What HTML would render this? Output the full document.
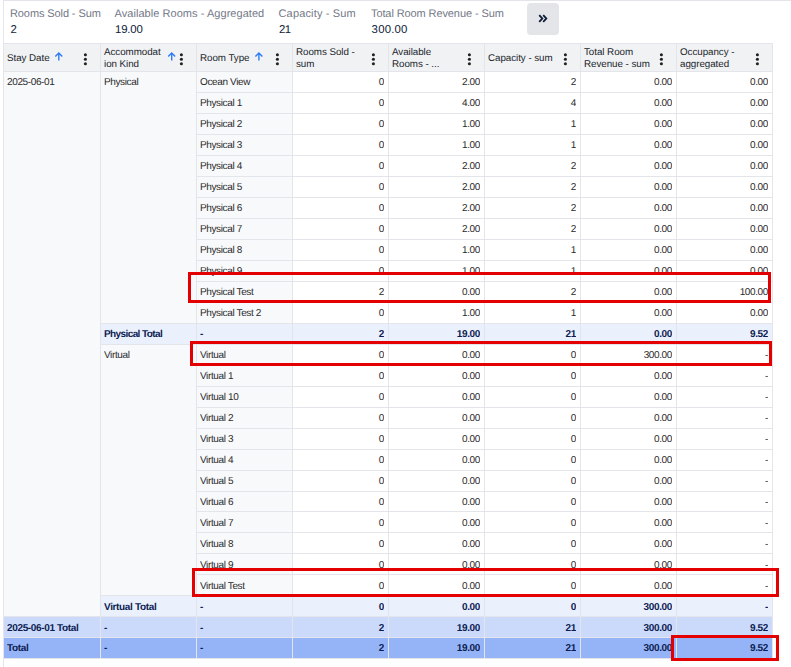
<!DOCTYPE html>
<html><head><meta charset="utf-8"><style>
html,body{margin:0;padding:0;width:791px;height:667px;overflow:hidden;background:#fff}
body{position:relative;font-family:"Liberation Sans",sans-serif;text-rendering:geometricPrecision}
body>div{position:absolute;box-sizing:border-box;white-space:nowrap}
.frame{}
.t{font-size:10px;color:#2a2a2a;letter-spacing:-0.37px;overflow:hidden}
.b{font-size:10px;color:#0c1d52;font-weight:bold;letter-spacing:-0.35px;overflow:hidden}
.h{font-size:9.8px;color:#1a1f2b;letter-spacing:-0.05px}
.kl{font-size:11px;color:#737887;line-height:14px}
.kv{font-size:11.4px;color:#0f1d3a;line-height:16px}
svg{display:block}
</style></head><body>
<div style="left:3px;top:0;width:788px;height:1px;background:#e3e5ea"></div>
<div style="left:3px;top:0;width:1px;height:667px;background:#e3e5ea"></div>
<div style="left:4px;top:44px;width:768px;height:27px;background:#f1f2f4"></div>
<div style="left:4px;top:72px;width:96px;height:544px;background:#f8f9fb"></div>
<div style="left:101px;top:72px;width:95px;height:251px;background:#f8f9fb"></div>
<div style="left:101px;top:345px;width:95px;height:250px;background:#f8f9fb"></div>
<div style="left:197px;top:72px;width:95px;height:544px;background:#f8f9fb"></div>
<div style="left:101px;top:324px;width:671px;height:20px;background:#ebf0fd"></div>
<div style="left:101px;top:596px;width:671px;height:20px;background:#ebf0fd"></div>
<div style="left:4px;top:617px;width:768px;height:20px;background:#cbdafa"></div>
<div style="left:4px;top:638px;width:768px;height:20px;background:#95b4f7"></div>
<div style="left:3px;top:43px;width:770px;height:1px;background:#e3e5ea"></div>
<div style="left:3px;top:71px;width:770px;height:1px;background:#e3e5ea"></div>
<div style="left:196px;top:92px;width:577px;height:1px;background:#e3e5ea"></div>
<div style="left:196px;top:113px;width:577px;height:1px;background:#e3e5ea"></div>
<div style="left:196px;top:134px;width:577px;height:1px;background:#e3e5ea"></div>
<div style="left:196px;top:155px;width:577px;height:1px;background:#e3e5ea"></div>
<div style="left:196px;top:176px;width:577px;height:1px;background:#e3e5ea"></div>
<div style="left:196px;top:197px;width:577px;height:1px;background:#e3e5ea"></div>
<div style="left:196px;top:218px;width:577px;height:1px;background:#e3e5ea"></div>
<div style="left:196px;top:239px;width:577px;height:1px;background:#e3e5ea"></div>
<div style="left:196px;top:260px;width:577px;height:1px;background:#e3e5ea"></div>
<div style="left:196px;top:281px;width:577px;height:1px;background:#e3e5ea"></div>
<div style="left:196px;top:302px;width:577px;height:1px;background:#e3e5ea"></div>
<div style="left:100px;top:323px;width:673px;height:1px;background:#e3e5ea"></div>
<div style="left:100px;top:344px;width:673px;height:1px;background:#e3e5ea"></div>
<div style="left:196px;top:365px;width:577px;height:1px;background:#e3e5ea"></div>
<div style="left:196px;top:386px;width:577px;height:1px;background:#e3e5ea"></div>
<div style="left:196px;top:407px;width:577px;height:1px;background:#e3e5ea"></div>
<div style="left:196px;top:428px;width:577px;height:1px;background:#e3e5ea"></div>
<div style="left:196px;top:449px;width:577px;height:1px;background:#e3e5ea"></div>
<div style="left:196px;top:470px;width:577px;height:1px;background:#e3e5ea"></div>
<div style="left:196px;top:491px;width:577px;height:1px;background:#e3e5ea"></div>
<div style="left:196px;top:511px;width:577px;height:1px;background:#e3e5ea"></div>
<div style="left:196px;top:532px;width:577px;height:1px;background:#e3e5ea"></div>
<div style="left:196px;top:553px;width:577px;height:1px;background:#e3e5ea"></div>
<div style="left:196px;top:574px;width:577px;height:1px;background:#e3e5ea"></div>
<div style="left:100px;top:595px;width:673px;height:1px;background:#e3e5ea"></div>
<div style="left:3px;top:616px;width:770px;height:1px;background:#e3e5ea"></div>
<div style="left:3px;top:637px;width:770px;height:1px;background:#e3e5ea"></div>
<div style="left:3px;top:658px;width:770px;height:1px;background:#e3e5ea"></div>
<div style="left:3px;top:43px;width:1px;height:616px;background:#e3e5ea"></div>
<div style="left:100px;top:43px;width:1px;height:616px;background:#e3e5ea"></div>
<div style="left:196px;top:43px;width:1px;height:616px;background:#e3e5ea"></div>
<div style="left:292px;top:43px;width:1px;height:616px;background:#e3e5ea"></div>
<div style="left:388px;top:43px;width:1px;height:616px;background:#e3e5ea"></div>
<div style="left:484px;top:43px;width:1px;height:616px;background:#e3e5ea"></div>
<div style="left:580px;top:43px;width:1px;height:616px;background:#e3e5ea"></div>
<div style="left:676px;top:43px;width:1px;height:616px;background:#e3e5ea"></div>
<div style="left:772px;top:43px;width:1px;height:616px;background:#e3e5ea"></div>
<div class="t" style="left:7px;top:73px;width:89px;height:20px;line-height:20px;text-align:left;">2025-06-01</div>
<div class="t" style="left:104px;top:73px;width:88px;height:20px;line-height:20px;text-align:left;">Physical</div>
<div class="t" style="left:104px;top:346px;width:88px;height:20px;line-height:20px;text-align:left;">Virtual</div>
<div class="t" style="left:200px;top:73px;width:88px;height:20px;line-height:20px;text-align:left;">Ocean View</div>
<div class="t" style="left:296px;top:73px;width:88px;height:20px;line-height:20px;text-align:right;">0</div>
<div class="t" style="left:392px;top:73px;width:88px;height:20px;line-height:20px;text-align:right;">2.00</div>
<div class="t" style="left:488px;top:73px;width:88px;height:20px;line-height:20px;text-align:right;">2</div>
<div class="t" style="left:584px;top:73px;width:88px;height:20px;line-height:20px;text-align:right;">0.00</div>
<div class="t" style="left:680px;top:73px;width:88px;height:20px;line-height:20px;text-align:right;">0.00</div>
<div class="t" style="left:200px;top:94px;width:88px;height:20px;line-height:20px;text-align:left;">Physical 1</div>
<div class="t" style="left:296px;top:94px;width:88px;height:20px;line-height:20px;text-align:right;">0</div>
<div class="t" style="left:392px;top:94px;width:88px;height:20px;line-height:20px;text-align:right;">4.00</div>
<div class="t" style="left:488px;top:94px;width:88px;height:20px;line-height:20px;text-align:right;">4</div>
<div class="t" style="left:584px;top:94px;width:88px;height:20px;line-height:20px;text-align:right;">0.00</div>
<div class="t" style="left:680px;top:94px;width:88px;height:20px;line-height:20px;text-align:right;">0.00</div>
<div class="t" style="left:200px;top:115px;width:88px;height:20px;line-height:20px;text-align:left;">Physical 2</div>
<div class="t" style="left:296px;top:115px;width:88px;height:20px;line-height:20px;text-align:right;">0</div>
<div class="t" style="left:392px;top:115px;width:88px;height:20px;line-height:20px;text-align:right;">1.00</div>
<div class="t" style="left:488px;top:115px;width:88px;height:20px;line-height:20px;text-align:right;">1</div>
<div class="t" style="left:584px;top:115px;width:88px;height:20px;line-height:20px;text-align:right;">0.00</div>
<div class="t" style="left:680px;top:115px;width:88px;height:20px;line-height:20px;text-align:right;">0.00</div>
<div class="t" style="left:200px;top:136px;width:88px;height:20px;line-height:20px;text-align:left;">Physical 3</div>
<div class="t" style="left:296px;top:136px;width:88px;height:20px;line-height:20px;text-align:right;">0</div>
<div class="t" style="left:392px;top:136px;width:88px;height:20px;line-height:20px;text-align:right;">1.00</div>
<div class="t" style="left:488px;top:136px;width:88px;height:20px;line-height:20px;text-align:right;">1</div>
<div class="t" style="left:584px;top:136px;width:88px;height:20px;line-height:20px;text-align:right;">0.00</div>
<div class="t" style="left:680px;top:136px;width:88px;height:20px;line-height:20px;text-align:right;">0.00</div>
<div class="t" style="left:200px;top:157px;width:88px;height:20px;line-height:20px;text-align:left;">Physical 4</div>
<div class="t" style="left:296px;top:157px;width:88px;height:20px;line-height:20px;text-align:right;">0</div>
<div class="t" style="left:392px;top:157px;width:88px;height:20px;line-height:20px;text-align:right;">2.00</div>
<div class="t" style="left:488px;top:157px;width:88px;height:20px;line-height:20px;text-align:right;">2</div>
<div class="t" style="left:584px;top:157px;width:88px;height:20px;line-height:20px;text-align:right;">0.00</div>
<div class="t" style="left:680px;top:157px;width:88px;height:20px;line-height:20px;text-align:right;">0.00</div>
<div class="t" style="left:200px;top:178px;width:88px;height:20px;line-height:20px;text-align:left;">Physical 5</div>
<div class="t" style="left:296px;top:178px;width:88px;height:20px;line-height:20px;text-align:right;">0</div>
<div class="t" style="left:392px;top:178px;width:88px;height:20px;line-height:20px;text-align:right;">2.00</div>
<div class="t" style="left:488px;top:178px;width:88px;height:20px;line-height:20px;text-align:right;">2</div>
<div class="t" style="left:584px;top:178px;width:88px;height:20px;line-height:20px;text-align:right;">0.00</div>
<div class="t" style="left:680px;top:178px;width:88px;height:20px;line-height:20px;text-align:right;">0.00</div>
<div class="t" style="left:200px;top:199px;width:88px;height:20px;line-height:20px;text-align:left;">Physical 6</div>
<div class="t" style="left:296px;top:199px;width:88px;height:20px;line-height:20px;text-align:right;">0</div>
<div class="t" style="left:392px;top:199px;width:88px;height:20px;line-height:20px;text-align:right;">2.00</div>
<div class="t" style="left:488px;top:199px;width:88px;height:20px;line-height:20px;text-align:right;">2</div>
<div class="t" style="left:584px;top:199px;width:88px;height:20px;line-height:20px;text-align:right;">0.00</div>
<div class="t" style="left:680px;top:199px;width:88px;height:20px;line-height:20px;text-align:right;">0.00</div>
<div class="t" style="left:200px;top:220px;width:88px;height:20px;line-height:20px;text-align:left;">Physical 7</div>
<div class="t" style="left:296px;top:220px;width:88px;height:20px;line-height:20px;text-align:right;">0</div>
<div class="t" style="left:392px;top:220px;width:88px;height:20px;line-height:20px;text-align:right;">2.00</div>
<div class="t" style="left:488px;top:220px;width:88px;height:20px;line-height:20px;text-align:right;">2</div>
<div class="t" style="left:584px;top:220px;width:88px;height:20px;line-height:20px;text-align:right;">0.00</div>
<div class="t" style="left:680px;top:220px;width:88px;height:20px;line-height:20px;text-align:right;">0.00</div>
<div class="t" style="left:200px;top:241px;width:88px;height:20px;line-height:20px;text-align:left;">Physical 8</div>
<div class="t" style="left:296px;top:241px;width:88px;height:20px;line-height:20px;text-align:right;">0</div>
<div class="t" style="left:392px;top:241px;width:88px;height:20px;line-height:20px;text-align:right;">1.00</div>
<div class="t" style="left:488px;top:241px;width:88px;height:20px;line-height:20px;text-align:right;">1</div>
<div class="t" style="left:584px;top:241px;width:88px;height:20px;line-height:20px;text-align:right;">0.00</div>
<div class="t" style="left:680px;top:241px;width:88px;height:20px;line-height:20px;text-align:right;">0.00</div>
<div class="t" style="left:200px;top:262px;width:88px;height:20px;line-height:20px;text-align:left;">Physical 9</div>
<div class="t" style="left:296px;top:262px;width:88px;height:20px;line-height:20px;text-align:right;">0</div>
<div class="t" style="left:392px;top:262px;width:88px;height:20px;line-height:20px;text-align:right;">1.00</div>
<div class="t" style="left:488px;top:262px;width:88px;height:20px;line-height:20px;text-align:right;">1</div>
<div class="t" style="left:584px;top:262px;width:88px;height:20px;line-height:20px;text-align:right;">0.00</div>
<div class="t" style="left:680px;top:262px;width:88px;height:20px;line-height:20px;text-align:right;">0.00</div>
<div class="t" style="left:200px;top:283px;width:88px;height:20px;line-height:20px;text-align:left;">Physical Test</div>
<div class="t" style="left:296px;top:283px;width:88px;height:20px;line-height:20px;text-align:right;">2</div>
<div class="t" style="left:392px;top:283px;width:88px;height:20px;line-height:20px;text-align:right;">0.00</div>
<div class="t" style="left:488px;top:283px;width:88px;height:20px;line-height:20px;text-align:right;">2</div>
<div class="t" style="left:584px;top:283px;width:88px;height:20px;line-height:20px;text-align:right;">0.00</div>
<div class="t" style="left:680px;top:283px;width:88px;height:20px;line-height:20px;text-align:right;">100.00</div>
<div class="t" style="left:200px;top:304px;width:88px;height:20px;line-height:20px;text-align:left;">Physical Test 2</div>
<div class="t" style="left:296px;top:304px;width:88px;height:20px;line-height:20px;text-align:right;">0</div>
<div class="t" style="left:392px;top:304px;width:88px;height:20px;line-height:20px;text-align:right;">1.00</div>
<div class="t" style="left:488px;top:304px;width:88px;height:20px;line-height:20px;text-align:right;">1</div>
<div class="t" style="left:584px;top:304px;width:88px;height:20px;line-height:20px;text-align:right;">0.00</div>
<div class="t" style="left:680px;top:304px;width:88px;height:20px;line-height:20px;text-align:right;">0.00</div>
<div class="t" style="left:200px;top:346px;width:88px;height:20px;line-height:20px;text-align:left;">Virtual</div>
<div class="t" style="left:296px;top:346px;width:88px;height:20px;line-height:20px;text-align:right;">0</div>
<div class="t" style="left:392px;top:346px;width:88px;height:20px;line-height:20px;text-align:right;">0.00</div>
<div class="t" style="left:488px;top:346px;width:88px;height:20px;line-height:20px;text-align:right;">0</div>
<div class="t" style="left:584px;top:346px;width:88px;height:20px;line-height:20px;text-align:right;">300.00</div>
<div class="t" style="left:680px;top:346px;width:88px;height:20px;line-height:20px;text-align:right;">-</div>
<div class="t" style="left:200px;top:367px;width:88px;height:20px;line-height:20px;text-align:left;">Virtual 1</div>
<div class="t" style="left:296px;top:367px;width:88px;height:20px;line-height:20px;text-align:right;">0</div>
<div class="t" style="left:392px;top:367px;width:88px;height:20px;line-height:20px;text-align:right;">0.00</div>
<div class="t" style="left:488px;top:367px;width:88px;height:20px;line-height:20px;text-align:right;">0</div>
<div class="t" style="left:584px;top:367px;width:88px;height:20px;line-height:20px;text-align:right;">0.00</div>
<div class="t" style="left:680px;top:367px;width:88px;height:20px;line-height:20px;text-align:right;">-</div>
<div class="t" style="left:200px;top:388px;width:88px;height:20px;line-height:20px;text-align:left;">Virtual 10</div>
<div class="t" style="left:296px;top:388px;width:88px;height:20px;line-height:20px;text-align:right;">0</div>
<div class="t" style="left:392px;top:388px;width:88px;height:20px;line-height:20px;text-align:right;">0.00</div>
<div class="t" style="left:488px;top:388px;width:88px;height:20px;line-height:20px;text-align:right;">0</div>
<div class="t" style="left:584px;top:388px;width:88px;height:20px;line-height:20px;text-align:right;">0.00</div>
<div class="t" style="left:680px;top:388px;width:88px;height:20px;line-height:20px;text-align:right;">-</div>
<div class="t" style="left:200px;top:409px;width:88px;height:20px;line-height:20px;text-align:left;">Virtual 2</div>
<div class="t" style="left:296px;top:409px;width:88px;height:20px;line-height:20px;text-align:right;">0</div>
<div class="t" style="left:392px;top:409px;width:88px;height:20px;line-height:20px;text-align:right;">0.00</div>
<div class="t" style="left:488px;top:409px;width:88px;height:20px;line-height:20px;text-align:right;">0</div>
<div class="t" style="left:584px;top:409px;width:88px;height:20px;line-height:20px;text-align:right;">0.00</div>
<div class="t" style="left:680px;top:409px;width:88px;height:20px;line-height:20px;text-align:right;">-</div>
<div class="t" style="left:200px;top:430px;width:88px;height:20px;line-height:20px;text-align:left;">Virtual 3</div>
<div class="t" style="left:296px;top:430px;width:88px;height:20px;line-height:20px;text-align:right;">0</div>
<div class="t" style="left:392px;top:430px;width:88px;height:20px;line-height:20px;text-align:right;">0.00</div>
<div class="t" style="left:488px;top:430px;width:88px;height:20px;line-height:20px;text-align:right;">0</div>
<div class="t" style="left:584px;top:430px;width:88px;height:20px;line-height:20px;text-align:right;">0.00</div>
<div class="t" style="left:680px;top:430px;width:88px;height:20px;line-height:20px;text-align:right;">-</div>
<div class="t" style="left:200px;top:451px;width:88px;height:20px;line-height:20px;text-align:left;">Virtual 4</div>
<div class="t" style="left:296px;top:451px;width:88px;height:20px;line-height:20px;text-align:right;">0</div>
<div class="t" style="left:392px;top:451px;width:88px;height:20px;line-height:20px;text-align:right;">0.00</div>
<div class="t" style="left:488px;top:451px;width:88px;height:20px;line-height:20px;text-align:right;">0</div>
<div class="t" style="left:584px;top:451px;width:88px;height:20px;line-height:20px;text-align:right;">0.00</div>
<div class="t" style="left:680px;top:451px;width:88px;height:20px;line-height:20px;text-align:right;">-</div>
<div class="t" style="left:200px;top:472px;width:88px;height:20px;line-height:20px;text-align:left;">Virtual 5</div>
<div class="t" style="left:296px;top:472px;width:88px;height:20px;line-height:20px;text-align:right;">0</div>
<div class="t" style="left:392px;top:472px;width:88px;height:20px;line-height:20px;text-align:right;">0.00</div>
<div class="t" style="left:488px;top:472px;width:88px;height:20px;line-height:20px;text-align:right;">0</div>
<div class="t" style="left:584px;top:472px;width:88px;height:20px;line-height:20px;text-align:right;">0.00</div>
<div class="t" style="left:680px;top:472px;width:88px;height:20px;line-height:20px;text-align:right;">-</div>
<div class="t" style="left:200px;top:493px;width:88px;height:20px;line-height:20px;text-align:left;">Virtual 6</div>
<div class="t" style="left:296px;top:493px;width:88px;height:20px;line-height:20px;text-align:right;">0</div>
<div class="t" style="left:392px;top:493px;width:88px;height:20px;line-height:20px;text-align:right;">0.00</div>
<div class="t" style="left:488px;top:493px;width:88px;height:20px;line-height:20px;text-align:right;">0</div>
<div class="t" style="left:584px;top:493px;width:88px;height:20px;line-height:20px;text-align:right;">0.00</div>
<div class="t" style="left:680px;top:493px;width:88px;height:20px;line-height:20px;text-align:right;">-</div>
<div class="t" style="left:200px;top:514px;width:88px;height:20px;line-height:20px;text-align:left;">Virtual 7</div>
<div class="t" style="left:296px;top:514px;width:88px;height:20px;line-height:20px;text-align:right;">0</div>
<div class="t" style="left:392px;top:514px;width:88px;height:20px;line-height:20px;text-align:right;">0.00</div>
<div class="t" style="left:488px;top:514px;width:88px;height:20px;line-height:20px;text-align:right;">0</div>
<div class="t" style="left:584px;top:514px;width:88px;height:20px;line-height:20px;text-align:right;">0.00</div>
<div class="t" style="left:680px;top:514px;width:88px;height:20px;line-height:20px;text-align:right;">-</div>
<div class="t" style="left:200px;top:535px;width:88px;height:20px;line-height:20px;text-align:left;">Virtual 8</div>
<div class="t" style="left:296px;top:535px;width:88px;height:20px;line-height:20px;text-align:right;">0</div>
<div class="t" style="left:392px;top:535px;width:88px;height:20px;line-height:20px;text-align:right;">0.00</div>
<div class="t" style="left:488px;top:535px;width:88px;height:20px;line-height:20px;text-align:right;">0</div>
<div class="t" style="left:584px;top:535px;width:88px;height:20px;line-height:20px;text-align:right;">0.00</div>
<div class="t" style="left:680px;top:535px;width:88px;height:20px;line-height:20px;text-align:right;">-</div>
<div class="t" style="left:200px;top:556px;width:88px;height:20px;line-height:20px;text-align:left;">Virtual 9</div>
<div class="t" style="left:296px;top:556px;width:88px;height:20px;line-height:20px;text-align:right;">0</div>
<div class="t" style="left:392px;top:556px;width:88px;height:20px;line-height:20px;text-align:right;">0.00</div>
<div class="t" style="left:488px;top:556px;width:88px;height:20px;line-height:20px;text-align:right;">0</div>
<div class="t" style="left:584px;top:556px;width:88px;height:20px;line-height:20px;text-align:right;">0.00</div>
<div class="t" style="left:680px;top:556px;width:88px;height:20px;line-height:20px;text-align:right;">-</div>
<div class="t" style="left:200px;top:577px;width:88px;height:20px;line-height:20px;text-align:left;">Virtual Test</div>
<div class="t" style="left:296px;top:577px;width:88px;height:20px;line-height:20px;text-align:right;">0</div>
<div class="t" style="left:392px;top:577px;width:88px;height:20px;line-height:20px;text-align:right;">0.00</div>
<div class="t" style="left:488px;top:577px;width:88px;height:20px;line-height:20px;text-align:right;">0</div>
<div class="t" style="left:584px;top:577px;width:88px;height:20px;line-height:20px;text-align:right;">0.00</div>
<div class="t" style="left:680px;top:577px;width:88px;height:20px;line-height:20px;text-align:right;">-</div>
<div class="b" style="left:104px;top:325px;width:88px;height:20px;line-height:20px;text-align:left;letter-spacing:-0.6px;">Physical Total</div>
<div class="b" style="left:200px;top:325px;width:88px;height:20px;line-height:20px;text-align:left;">-</div>
<div class="b" style="left:296px;top:325px;width:88px;height:20px;line-height:20px;text-align:right;">2</div>
<div class="b" style="left:392px;top:325px;width:88px;height:20px;line-height:20px;text-align:right;">19.00</div>
<div class="b" style="left:488px;top:325px;width:88px;height:20px;line-height:20px;text-align:right;">21</div>
<div class="b" style="left:584px;top:325px;width:88px;height:20px;line-height:20px;text-align:right;">0.00</div>
<div class="b" style="left:680px;top:325px;width:88px;height:20px;line-height:20px;text-align:right;">9.52</div>
<div class="b" style="left:104px;top:598px;width:88px;height:20px;line-height:20px;text-align:left;">Virtual Total</div>
<div class="b" style="left:200px;top:598px;width:88px;height:20px;line-height:20px;text-align:left;">-</div>
<div class="b" style="left:296px;top:598px;width:88px;height:20px;line-height:20px;text-align:right;">0</div>
<div class="b" style="left:392px;top:598px;width:88px;height:20px;line-height:20px;text-align:right;">0.00</div>
<div class="b" style="left:488px;top:598px;width:88px;height:20px;line-height:20px;text-align:right;">0</div>
<div class="b" style="left:584px;top:598px;width:88px;height:20px;line-height:20px;text-align:right;">300.00</div>
<div class="b" style="left:680px;top:598px;width:88px;height:20px;line-height:20px;text-align:right;">-</div>
<div class="b" style="left:7px;top:619px;width:89px;height:20px;line-height:20px;text-align:left;">2025-06-01 Total</div>
<div class="b" style="left:104px;top:619px;width:88px;height:20px;line-height:20px;text-align:left;">-</div>
<div class="b" style="left:200px;top:619px;width:88px;height:20px;line-height:20px;text-align:left;">-</div>
<div class="b" style="left:296px;top:619px;width:88px;height:20px;line-height:20px;text-align:right;">2</div>
<div class="b" style="left:392px;top:619px;width:88px;height:20px;line-height:20px;text-align:right;">19.00</div>
<div class="b" style="left:488px;top:619px;width:88px;height:20px;line-height:20px;text-align:right;">21</div>
<div class="b" style="left:584px;top:619px;width:88px;height:20px;line-height:20px;text-align:right;">300.00</div>
<div class="b" style="left:680px;top:619px;width:88px;height:20px;line-height:20px;text-align:right;">9.52</div>
<div class="b" style="left:7px;top:639px;width:89px;height:20px;line-height:20px;text-align:left;">Total</div>
<div class="b" style="left:104px;top:639px;width:88px;height:20px;line-height:20px;text-align:left;">-</div>
<div class="b" style="left:200px;top:639px;width:88px;height:20px;line-height:20px;text-align:left;">-</div>
<div class="b" style="left:296px;top:639px;width:88px;height:20px;line-height:20px;text-align:right;">2</div>
<div class="b" style="left:392px;top:639px;width:88px;height:20px;line-height:20px;text-align:right;">19.00</div>
<div class="b" style="left:488px;top:639px;width:88px;height:20px;line-height:20px;text-align:right;">21</div>
<div class="b" style="left:584px;top:639px;width:88px;height:20px;line-height:20px;text-align:right;">300.00</div>
<div class="b" style="left:680px;top:639px;width:88px;height:20px;line-height:20px;text-align:right;">9.52</div>
<div class="h" style="left:7px;top:45px;width:80px;height:27px;line-height:27px">Stay Date</div>
<div style="left:82px;top:50px;width:8px;height:18px"><svg width="8" height="18" viewBox="0 0 8 18"><circle cx="3.4" cy="4.8" r="1.55" fill="#222"/><circle cx="3.4" cy="9.3" r="1.55" fill="#222"/><circle cx="3.4" cy="13.7" r="1.55" fill="#222"/></svg></div>
<div class="h" style="left:104px;top:47px;width:80px;height:24px;line-height:11.6px">Accommodat<br>ion Kind</div>
<div style="left:178px;top:50px;width:8px;height:18px"><svg width="8" height="18" viewBox="0 0 8 18"><circle cx="3.4" cy="4.8" r="1.55" fill="#222"/><circle cx="3.4" cy="9.3" r="1.55" fill="#222"/><circle cx="3.4" cy="13.7" r="1.55" fill="#222"/></svg></div>
<div class="h" style="left:200px;top:45px;width:80px;height:27px;line-height:27px">Room Type</div>
<div style="left:274px;top:50px;width:8px;height:18px"><svg width="8" height="18" viewBox="0 0 8 18"><circle cx="3.4" cy="4.8" r="1.55" fill="#222"/><circle cx="3.4" cy="9.3" r="1.55" fill="#222"/><circle cx="3.4" cy="13.7" r="1.55" fill="#222"/></svg></div>
<div class="h" style="left:296px;top:47px;width:80px;height:24px;line-height:11.6px">Rooms Sold -<br>sum</div>
<div style="left:370px;top:50px;width:8px;height:18px"><svg width="8" height="18" viewBox="0 0 8 18"><circle cx="3.4" cy="4.8" r="1.55" fill="#222"/><circle cx="3.4" cy="9.3" r="1.55" fill="#222"/><circle cx="3.4" cy="13.7" r="1.55" fill="#222"/></svg></div>
<div class="h" style="left:392px;top:47px;width:80px;height:24px;line-height:11.6px">Available<br>Rooms - ...</div>
<div style="left:466px;top:50px;width:8px;height:18px"><svg width="8" height="18" viewBox="0 0 8 18"><circle cx="3.4" cy="4.8" r="1.55" fill="#222"/><circle cx="3.4" cy="9.3" r="1.55" fill="#222"/><circle cx="3.4" cy="13.7" r="1.55" fill="#222"/></svg></div>
<div class="h" style="left:488px;top:45px;width:80px;height:27px;line-height:27px">Capacity - sum</div>
<div style="left:562px;top:50px;width:8px;height:18px"><svg width="8" height="18" viewBox="0 0 8 18"><circle cx="3.4" cy="4.8" r="1.55" fill="#222"/><circle cx="3.4" cy="9.3" r="1.55" fill="#222"/><circle cx="3.4" cy="13.7" r="1.55" fill="#222"/></svg></div>
<div class="h" style="left:584px;top:47px;width:80px;height:24px;line-height:11.6px">Total Room<br>Revenue - sum</div>
<div style="left:658px;top:50px;width:8px;height:18px"><svg width="8" height="18" viewBox="0 0 8 18"><circle cx="3.4" cy="4.8" r="1.55" fill="#222"/><circle cx="3.4" cy="9.3" r="1.55" fill="#222"/><circle cx="3.4" cy="13.7" r="1.55" fill="#222"/></svg></div>
<div class="h" style="left:680px;top:47px;width:80px;height:24px;line-height:11.6px">Occupancy -<br>aggregated</div>
<div style="left:754px;top:50px;width:8px;height:18px"><svg width="8" height="18" viewBox="0 0 8 18"><circle cx="3.4" cy="4.8" r="1.55" fill="#222"/><circle cx="3.4" cy="9.3" r="1.55" fill="#222"/><circle cx="3.4" cy="13.7" r="1.55" fill="#222"/></svg></div>
<div style="left:54px;top:51px;width:10px;height:11px"><svg width="10" height="11" viewBox="0 0 10 11"><path d="M4.8 9.5V2.1M1.2999999999999998 5.5L4.8 2.0L8.3 5.5" stroke="#2f7cf6" stroke-width="1.4" fill="none"/></svg></div>
<div style="left:167px;top:51px;width:10px;height:11px"><svg width="10" height="11" viewBox="0 0 10 11"><path d="M4.7 9.5V2.1M1.2000000000000002 5.5L4.7 2.0L8.2 5.5" stroke="#2f7cf6" stroke-width="1.4" fill="none"/></svg></div>
<div style="left:254px;top:51px;width:10px;height:11px"><svg width="10" height="11" viewBox="0 0 10 11"><path d="M4.9 9.5V2.1M1.4000000000000004 5.5L4.9 2.0L8.4 5.5" stroke="#2f7cf6" stroke-width="1.4" fill="none"/></svg></div>
<div class="kl" style="left:10px;top:7px;width:200px;height:14px;letter-spacing:-0.1px">Rooms Sold - Sum</div>
<div class="kv" style="left:10.6px;top:22px;width:200px;height:16px;letter-spacing:0px">2</div>
<div class="kl" style="left:114.5px;top:7px;width:200px;height:14px;letter-spacing:0.05px">Available Rooms - Aggregated</div>
<div class="kv" style="left:115.1px;top:22px;width:200px;height:16px;letter-spacing:-0.2px">19.00</div>
<div class="kl" style="left:278.5px;top:7px;width:200px;height:14px;letter-spacing:0.16px">Capacity - Sum</div>
<div class="kv" style="left:279.1px;top:22px;width:200px;height:16px;letter-spacing:-0.6px">21</div>
<div class="kl" style="left:371px;top:7px;width:200px;height:14px;letter-spacing:-0.1px">Total Room Revenue - Sum</div>
<div class="kv" style="left:371.6px;top:22px;width:200px;height:16px;letter-spacing:0.2px">300.00</div>
<div style="left:527px;top:3px;width:32px;height:32px;background:#e3e5e9;border-radius:4px"></div>
<div style="left:538px;top:14px;width:10px;height:9px"><svg width="10" height="9" viewBox="0 0 10 9"><path d="M1.2 1.2L4.3 4.5L1.2 7.8M5.2 1.2L8.3 4.5L5.2 7.8" stroke="#0b1a33" stroke-width="1.8" fill="none"/></svg></div>
<div style="left:188px;top:272px;width:583px;height:31px;border:3px solid #e40000"></div>
<div style="left:190px;top:341px;width:582px;height:25px;border:3px solid #e40000"></div>
<div style="left:192px;top:568px;width:587px;height:29px;border:3px solid #e40000"></div>
<div style="left:671px;top:635px;width:108px;height:26px;border:3px solid #e40000"></div>
</body></html>
